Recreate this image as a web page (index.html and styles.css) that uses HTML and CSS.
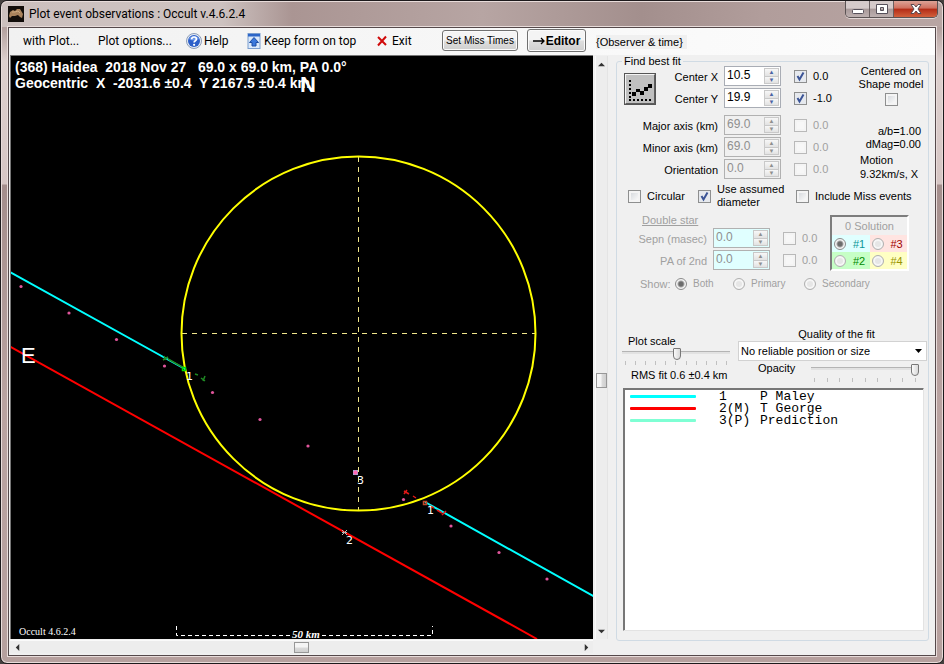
FILE: index.html
```html
<!DOCTYPE html>
<html lang="en">
<head>
<meta charset="utf-8">
<title>Plot event observations : Occult v.4.6.2.4</title>
<link rel="stylesheet" href="styles.css">
</head>
<body>
<div class="window">
  <header class="titlebar">
    <svg class="app-icon" viewBox="0 0 16 16" aria-hidden="true"><rect width="16" height="16" fill="#120d0a"/><path d="M1 10 2 6 5 4 7 5 9 3 12 3 15 8 14 12 12 11 10 9 7 10 4 10 2 12Z" fill="#a9825c"/><path d="M4 6 7 6 10 5 12 7" stroke="#cba880" fill="none"/></svg>
    <h1 class="title">Plot event observations : Occult v.4.6.2.4</h1>
    <div class="caption">
      <button class="cap min" aria-label="Minimize"><svg viewBox="0 0 14 12"><rect x="1.500" y="6.500" width="11" height="4" rx="1" fill="#fff" stroke="#56505a"/></svg></button>
      <button class="cap max" aria-label="Maximize"><svg viewBox="0 0 14 12"><path d="M1.500 1.500h11v9h-11zM5.500 4.500v3h3v-3z" fill="#fff" fill-rule="evenodd" stroke="#56505a"/></svg></button>
      <button class="cap close" aria-label="Close"><svg viewBox="0 0 14 12"><path d="M2 1.500h3l2 2.500 2-2.500h3L9 6l3 4.500H9L7 8l-2 2.500H2L5 6z" fill="#fff" stroke="#5b4a50"/></svg></button>
    </div>
  </header>

  <div class="client">
    <nav class="toolbar">
      <button class="menu">with Plot...</button>
      <button class="menu">Plot options...</button>
      <button class="menu"><svg class="ico" viewBox="0 0 16 16" aria-hidden="true"><circle cx="8" cy="8" r="7.500" fill="#e6ecf4" stroke="#8d9db8"/><circle cx="8" cy="8" r="6" fill="#2c5fc9"/><path d="M3 6a5.500 5 0 0 1 10 0q-5 3-10 0" fill="#6b97ea"/><path d="M5.700 6.300q0-2.300 2.400-2.300 2.300 0 2.300 2 0 1.200-1.300 1.900-1 .6-1 1.600" fill="none" stroke="#fff" stroke-width="1.700"/><circle cx="8.100" cy="11.800" r="1.100" fill="#fff"/></svg>Help</button>
      <button class="menu"><svg class="ico" viewBox="0 0 16 16" aria-hidden="true"><rect x="2" y=".5" width="12" height="15" fill="#dbe9fb" stroke="#7b9dce"/><rect x="2" y="1" width="12" height="2.500" fill="#2d66c8"/><path d="M8 4.500 12.500 9.500H10V13H6V9.500H3.500Z" fill="#3b78dc" stroke="#1d4da4"/></svg>Keep form on top</button>
      <button class="menu"><svg class="ico" viewBox="0 0 16 16" aria-hidden="true"><path d="M4 4 12 12M12 3.500 4 12.500" stroke="#d00b0b" stroke-width="2" fill="none"/></svg>Exit</button>
      <button class="push miss">Set Miss Times</button>
      <button class="push editor"><svg viewBox="0 0 12 8" aria-hidden="true"><path d="M0 4H11M8 1 11 4 8 7" fill="none" stroke="#000" stroke-width="1.300"/></svg>Editor</button>
      <span class="observer">{Observer &amp; time}</span>
    </nav>

    <main class="work">
      <div class="plot">
        <svg class="chart" viewBox="11 56 582 583" preserveAspectRatio="xMinYMin slice" role="img" aria-label="Chord plot">
          <g class="caption-text">
            <text x="15" y="72" xml:space="preserve">(368) Haidea  2018 Nov 27   69.0 x 69.0 km, PA 0.0°</text>
            <text x="15" y="88" xml:space="preserve">Geocentric  X  -2031.6 ±0.4  Y 2167.5 ±0.4 km</text>
          </g>
          <text class="compass bold" x="300" y="92">N</text>
          <g stroke="#f0e68c" fill="none" stroke-dasharray="5 5">
            <path d="M358.500 157V510M182 333.500H535"/>
          </g>
          <circle cx="358.500" cy="333.500" r="177" fill="none" stroke="#ff0" stroke-width="2"/>
          <g fill="none" stroke-width="2">
            <path d="M10 272 185 369M425 502 594 596.500" stroke="#0ff"/>
            <path d="M10 346.500 537 639" stroke="#f00"/>
          </g>
          <g fill="none" stroke="#1f8a24" stroke-width="1.500">
            <path d="M163 360l5-3M164 356l2 4M168 359 184 368M195 374l3 1M201 378l4 3M205 376l-2 5"/>
            <rect x="182.500" y="367.500" width="3" height="3" stroke="#0d0"/>
          </g>
          <g fill="none" stroke="#e01818" stroke-width="1.500">
            <path d="M404 494l3-4M404 491l5 3M413 496l3 2M430 506l4 2M437 510l5 3M442 515l4-4"/>
            <rect x="423.500" y="501.500" width="3" height="3" stroke="#c0492c"/>
          </g>
          <g fill="#e0559b">
            <circle cx="21" cy="286.500" r="1.600"/><circle cx="69" cy="313" r="1.600"/><circle cx="116.500" cy="339.500" r="1.600"/><circle cx="164.500" cy="366" r="1.600"/><circle cx="212.500" cy="392.500" r="1.600"/><circle cx="260" cy="419.500" r="1.600"/><circle cx="308" cy="446" r="1.600"/><circle cx="403.500" cy="499.500" r="1.600"/><circle cx="451" cy="526" r="1.600"/><circle cx="499" cy="552.500" r="1.600"/><circle cx="547" cy="579" r="1.600"/>
          </g>
          <rect x="353" y="470" width="5" height="5" fill="#8fb4d8"/><circle cx="355.500" cy="472.500" r="2.200" fill="#ff69b4"/>
          <path d="M342 530l5 5M347 530l-5 5M342 532.500h5" stroke="#b7b7b7"/>
          <g class="mark">
            <text x="186" y="380">1</text><text x="427" y="514">1</text><text x="346" y="544">2</text><text x="357" y="484">3</text>
          </g>
          <text class="compass" x="21" y="363">E</text>
          <path d="M176.500 626V635.500H290M322 635.500H432.500V626" fill="none" stroke="#fff" stroke-dasharray="4 3"/>
          <text class="scale-text" x="292" y="638">50 km</text>
          <text class="version" x="19" y="635">Occult 4.6.2.4</text>
        </svg>
      </div>
      <div class="bar vertical">
        <button class="arrow" aria-label="Scroll up"><svg viewBox="0 0 8 8"><path d="M0 6 4 2 8 6z"/></svg></button>
        <span class="thumb"></span>
        <button class="arrow" aria-label="Scroll down"><svg viewBox="0 0 8 8"><path d="M0 2 4 6 8 2z"/></svg></button>
      </div>
      <div class="bar horizontal">
        <button class="arrow" aria-label="Scroll left"><svg viewBox="0 0 8 8"><path d="M6 0 2 4 6 8z"/></svg></button>
        <span class="thumb"></span>
        <button class="arrow" aria-label="Scroll right"><svg viewBox="0 0 8 8"><path d="M2 0 6 4 2 8z"/></svg></button>
      </div>

      <fieldset class="panel">
        <legend>Find best fit</legend>

        <div class="fit">
          <div class="params">
            <button class="fit-button" aria-label="Find best fit"><svg viewBox="0 0 28 28"><path d="M3 5h2v2H3zM3 9h2v2H3zM3 13h2v2H3zM3 17h2v2H3zM3 21h2v2H3zM3 24h2v2H3zM7 24h2v2H7zM11 24h2v2h-2zM15 24h2v2h-2zM19 24h2v2h-2zM23 24h2v2h-2zM6 17h4v4H6zM10 14h4v3h-4zM14 16h4v4h-4zM18 12h4v4h-4zM22 9h4v4h-4z"/></svg></button>
            <label class="name short" for="cx">Center X</label>
            <span class="spin"><input id="cx" value="10.5"><span class="steps"><button aria-label="Up">▲</button><button aria-label="Down">▼</button></span></span>
            <label class="delta"><input type="checkbox" checked>0.0</label>
            <label class="name short" for="cy">Center Y</label>
            <span class="spin"><input id="cy" value="19.9"><span class="steps"><button aria-label="Up">▲</button><button aria-label="Down">▼</button></span></span>
            <label class="delta"><input type="checkbox" checked>-1.0</label>
            <span class="gap"></span>
            <label class="name long" for="major">Major axis (km)</label>
            <span class="spin off"><input id="major" value="69.0" disabled><span class="steps"><button disabled aria-label="Up">▲</button><button disabled aria-label="Down">▼</button></span></span>
            <label class="delta off"><input type="checkbox" disabled>0.0</label>
            <label class="name long" for="minor">Minor axis (km)</label>
            <span class="spin off"><input id="minor" value="69.0" disabled><span class="steps"><button disabled aria-label="Up">▲</button><button disabled aria-label="Down">▼</button></span></span>
            <label class="delta off"><input type="checkbox" disabled>0.0</label>
            <label class="name long" for="orient">Orientation</label>
            <span class="spin off"><input id="orient" value="0.0" disabled><span class="steps"><button disabled aria-label="Up">▲</button><button disabled aria-label="Down">▼</button></span></span>
            <label class="delta off"><input type="checkbox" disabled>0.0</label>
          </div>
          <div class="side">
            <label class="centered">Centered on<br>Shape model<input type="checkbox"></label>
            <p class="ratio">a/b=1.00<br>dMag=0.00</p>
            <p class="motion">Motion<br>9.32km/s, X</p>
          </div>
        </div>

        <div class="options">
          <label><input type="checkbox">Circular</label>
          <label class="assumed"><input type="checkbox" checked><span>Use assumed<br>diameter</span></label>
          <label><input type="checkbox">Include Miss events</label>
        </div>

        <div class="double">
          <div class="pair">
            <span class="heading">Double star</span>
            <label class="name" for="sepn">Sepn (masec)</label>
            <span class="spin off aqua"><input id="sepn" value="0.0" disabled><span class="steps"><button disabled aria-label="Up">▲</button><button disabled aria-label="Down">▼</button></span></span>
            <label class="delta off"><input type="checkbox" disabled>0.0</label>
            <label class="name" for="pa">PA of 2nd</label>
            <span class="spin off aqua"><input id="pa" value="0.0" disabled><span class="steps"><button disabled aria-label="Up">▲</button><button disabled aria-label="Down">▼</button></span></span>
            <label class="delta off"><input type="checkbox" disabled>0.0</label>
          </div>
          <div class="solutions">
            <span class="sol-title">0 Solution</span>
            <label class="s1"><input type="radio" name="sol" checked disabled>#1</label>
            <label class="s3"><input type="radio" name="sol" disabled>#3</label>
            <label class="s2"><input type="radio" name="sol" disabled>#2</label>
            <label class="s4"><input type="radio" name="sol" disabled>#4</label>
          </div>
        </div>

        <div class="show">
          <span class="show-name">Show:</span>
          <label><input type="radio" name="show" checked disabled>Both</label>
          <label><input type="radio" name="show" disabled>Primary</label>
          <label><input type="radio" name="show" disabled>Secondary</label>
        </div>

        <div class="display">
          <div class="scale">
            <label for="scale">Plot scale</label>
            <input id="scale" type="range" min="0" max="100" value="51">
            <span class="ticks"><i></i><i></i><i></i><i></i><i></i><i></i><i></i><i></i><i></i><i></i><i></i></span>
            <p>RMS fit 0.6 ±0.4 km</p>
          </div>
          <div class="quality">
            <label for="quality">Quality of the fit</label>
            <select id="quality"><option>No reliable position or size</option></select>
            <div class="opacity">
              <label for="opacity">Opacity</label>
              <div class="slide">
                <input id="opacity" type="range" min="0" max="100" value="100">
                <span class="ticks"><i></i><i></i><i></i><i></i><i></i><i></i><i></i><i></i><i></i></span>
              </div>
            </div>
          </div>
        </div>

        <ul class="observers">
          <li><span class="line cyan"></span><span>1</span><span>P Maley</span></li>
          <li><span class="line red"></span><span>2(M)</span><span>T George</span></li>
          <li><span class="line green"></span><span>3(P)</span><span>Prediction</span></li>
        </ul>
      </fieldset>
    </main>
  </div>
</div>
</body>
</html>
```
FILE: styles.css
```css
* { box-sizing: border-box; }
body { margin: 0; background: #45403f; font: 11px/14px "Liberation Sans", Arial, sans-serif; color: #000; }
button, input, select { font: inherit; color: inherit; margin: 0; padding: 0; }
p, ul { margin: 0; padding: 0; }
svg { display: block; }

.window { height: 100vh; min-height: 600px; display: flex; flex-direction: column; padding: 0 7px 7px; border: 1px solid #1d1a1c; border-radius: 7px; box-shadow: inset 0 0 0 1px #e8dcda; background: linear-gradient(#b3a09e 0 27px, #ddd0ce 60px, #d6c6c4 183px, #a48e8c 184px, #b9a3a1 400px, #b6a09e); }

.titlebar { display: flex; align-items: center; height: 26px; margin: 0 -6px; padding-left: 6px; border-radius: 6px 6px 0 0; border-top: 1px solid #e8dcda; background: linear-gradient(90deg, #ccc0be 0, #cdc2c0 220px, #aa9593 290px, #b7a5a3 480px, #ad9a98 560px, #a38f8d 640px, #b19d9b 760px, #b8a5a3); }
.app-icon { width: 16px; height: 16px; margin-bottom: 1px; }
.title { flex: 1; margin: 0 0 1px 5px; font: 12px/16px Roboto, sans-serif; white-space: nowrap; }
.caption { display: flex; align-self: flex-start; height: 17px; margin: -1px 4px 0 0; border: 1px solid #5b5354; border-top: 0; border-radius: 0 0 5px 5px; overflow: hidden; box-shadow: 0 1px 0 #e1d6d5; }
.cap { width: 24px; border: 0; border-right: 1px solid #6a5f60; background: linear-gradient(#d5caca 0 45%, #a89999 50%, #bdb0b0); display: flex; align-items: center; justify-content: center; }
.cap svg { width: 14px; height: 12px; }
.cap.close { width: 43px; border-right: 0; background: linear-gradient(#dca397 0, #cf6f5e 45%, #b32b16 50%, #d2603c); }

.client { flex: 1; min-height: 0; display: flex; flex-direction: column; border: 1px solid #55494b; outline: 1px solid #e8dcda; background: #f0f0f0; }

.toolbar { display: grid; grid-template-columns: 75px 88px 60px 128px 68px 76px 60px 1fr; align-items: center; height: 27px; flex: none; padding: 0 0 2px 14px; background: linear-gradient(90deg, #f1f1f1, #fdfdfd); }
.menu { display: flex; align-items: center; gap: 2px; padding: 0; border: 0; background: none; font: 12px/16px Roboto, sans-serif; white-space: nowrap; }
.ico { width: 16px; height: 16px; flex: none; }
.push { border: 1px solid #707070; border-radius: 3px; background: linear-gradient(#f4f4f4 0 48%, #dedede 52%, #cfcfcf); box-shadow: inset 0 0 0 1px #fbfbfb; white-space: nowrap; }
.miss { height: 21px; font-size: 10px; }
.editor { height: 23px; margin: 0 0 0 9px; width: 59px; display: flex; align-items: center; justify-content: center; gap: 1px; font-size: 12px; font-weight: bold; }
.editor svg { width: 12px; height: 8px; }
.observer { justify-self: start; margin: 2px 0 0 18px; background: #f0f0f0; white-space: nowrap; padding-right: 4px; }

.work { flex: 1; min-height: 0; display: grid; grid-template-columns: minmax(0, 1fr) 15px 327px; grid-template-rows: minmax(0, 1fr) 16px; }
.plot { margin-left: 1px; border: solid #777; border-width: 1px 0 0 1px; background: #000; overflow: hidden; min-height: 0; }
.chart { width: 100%; height: 100%; }
.caption-text { fill: #fff; font: bold 14px "Liberation Sans", sans-serif; white-space: pre; }
.compass { fill: #fff; font: 22px "Liberation Sans", sans-serif; }
.compass.bold { font-weight: bold; }
.mark { fill: #fff; font: 11px "DejaVu Sans", sans-serif; }
.scale-text { fill: #fff; font: italic bold 11px "Liberation Serif", serif; }
.version { fill: #fff; font: 10px "Liberation Serif", serif; }

.bar { display: flex; align-items: center; justify-content: space-between; background: #ededed; }
.bar.vertical { flex-direction: column; margin: 1px 0 0 2px; padding: 4px 0; border-left: 1px solid #fafafa; border-right: 1px solid #e4e4e4; }
.bar.horizontal { grid-row: 2; grid-column: 1; margin: 1px 0 2px 1px; padding: 0 2px; border-top: 1px solid #fafafa; }
.arrow { width: 10px; height: 8px; border: 0; background: none; display: flex; align-items: center; justify-content: center; }
.arrow svg { width: 7px; height: 7px; fill: #333; }
.thumb { border: 1px solid #979797; background: linear-gradient(#f5f5f5 0 48%, #dcdcdc 52%, #cfcfcf); }
.vertical .thumb { width: 11px; height: 15px; margin-top: 66px; background: linear-gradient(90deg, #f5f5f5 0 48%, #dcdcdc 52%, #cfcfcf); }
.horizontal .thumb { width: 15px; height: 11px; }

.panel { grid-column: 3; grid-row: 1 / 3; min-width: 0; margin: 0 6px 14px 8px; padding: 0; border: 1px solid #d0dbe4; border-radius: 3px; display: flex; flex-direction: column; }
.panel legend { margin-left: 5px; padding: 0 2px; line-height: 12px; }

input[type=checkbox], input[type=radio] { appearance: none; width: 13px; height: 13px; flex: none; border: 1px solid #8e8f8f; background: linear-gradient(135deg, #cfd3d8, #f8f8f8 80%); box-shadow: inset 0 0 0 2px #f4f4f4; }
input[type=checkbox]:checked { background: url("data:image/svg+xml,%3Csvg xmlns='http://www.w3.org/2000/svg' viewBox='0 0 11 11'%3E%3Cpath d='M2.500 5 4.500 8.500 8.500 1.500' fill='none' stroke='%233b5496' stroke-width='2'/%3E%3C/svg%3E") #e6e9ee; box-shadow: none; }
input[type=checkbox]:disabled { border-color: #b9b9b9; background: #f7f7f7; }
input[type=radio] { width: 12px; height: 12px; border-radius: 50%; border-color: #b0b0b0; }
input[type=radio]:disabled { background: #e6e6e6; box-shadow: inset 0 0 0 2px #f6f6f6; }
input[type=radio]:checked:disabled { border-color: #8c8c8c; background: radial-gradient(circle, #6c6c6c 0 2px, #a5a5a5 3px, #f4f4f4 4px); box-shadow: none; }

.fit { display: flex; margin-top: -2px; }
.params { flex: 1; display: grid; grid-template-columns: 40px 67px 57px 1fr; grid-template-rows: 22px 22px 5px 22px 22px 22px; align-items: center; }
.fit-button { grid-row: 1 / 3; grid-column: 1; width: 32px; height: 32px; margin: 4px 0 0 7px; border: 2px solid; border-color: #f4f4f4 #5e5e5e #5e5e5e #f4f4f4; outline: 1px solid #555; outline-offset: -1px; background: #c0c0c0; }
.fit-button svg { width: 28px; height: 28px; }
.name { padding: 2px 6px 0 0; text-align: right; white-space: nowrap; }
.short { grid-column: 2; }
.long { grid-column: 1 / 3; }
.gap { grid-column: 1 / 5; height: 5px; }
.spin { display: flex; width: 57px; height: 20px; border: 1px solid #a9adb5; background: #fff; }
.spin input { flex: 1; min-width: 0; border: 0; padding: 0 0 3px 2px; background: none; font-size: 12px; color: #000; }
.steps { display: flex; flex-direction: column; width: 15px; margin: 1px; }
.steps button { flex: 1; min-height: 0; border: 1px solid #c9c9c9; background: linear-gradient(#f7f7f7, #e2e2e2); font-size: 6px; line-height: 6px; color: #4b64a4; display: flex; align-items: center; justify-content: center; }
.steps button + button { border-top: 0; }
.spin.off { background: #f0f0f0; border-color: #b1b1b1; }
.spin.off input, .spin.off button { color: #8f8f8f; }
.spin.off.aqua { background: #e0ffff; }
.delta { display: flex; align-items: center; gap: 6px; padding-left: 13px; }
.off { color: #a0a0a0; }

.side { width: 92px; }
.centered { display: block; text-align: center; line-height: 13px; padding-left: 18px; white-space: nowrap; }
.centered input { display: block; margin: 2px auto 0; }
.ratio { margin: 19px 7px 0 0; line-height: 13px; text-align: right; }
.motion { margin: 2px 0 0 24px; line-height: 14px; white-space: nowrap; }

.options { display: flex; align-items: center; height: 26px; margin-top: 2px; padding-left: 11px; }
.options label { display: flex; align-items: center; gap: 6px; width: 70px; white-space: nowrap; }
.options .assumed { width: 98px; line-height: 13px; }

.double { display: flex; color: #a0a0a0; margin-top: 3px; }
.pair { width: 213px; display: grid; grid-template-columns: 96px 57px 1fr; grid-template-rows: 15px 22px 22px; align-items: center; }
.heading { grid-column: 1 / 4; margin-left: 25px; text-decoration: underline; }
.solutions { width: 79px; height: 56px; margin-top: 3px; display: grid; grid-template-columns: 1fr 1fr; grid-template-rows: 18px 17px 17px; border: 2px solid; border-color: #7d7d7d #fff #fff #7d7d7d; }
.sol-title { grid-column: 1 / 3; padding-top: 2px; text-align: center; }
.solutions label { display: flex; align-items: center; gap: 7px; padding-left: 2px; }
.s1 { background: #e0ffff; color: #0b9797; }
.s2 { background: #c6ffc6; color: #008a00; }
.s3 { background: #ffe4e1; color: #a00000; }
.s4 { background: #ffffc4; color: #9a9300; }

.show { display: grid; grid-template-columns: 35px 58px 71px 1fr; align-items: center; height: 22px; margin-top: 2px; padding-left: 23px; color: #a0a0a0; font-size: 10px; }
.show-name { font-size: 11px; }
.show label { display: flex; align-items: center; gap: 6px; }

.display { display: flex; margin-top: 32px; }
.scale { width: 108px; margin: 7px 8px 0 5px; display: flex; flex-direction: column; }
.scale label { padding-left: 6px; }
.scale p { padding-left: 9px; margin-top: 2px; white-space: nowrap; }
input[type=range] { appearance: none; width: 100%; height: 13px; background: linear-gradient(#b4b4b4, #b4b4b4) 0 4px / 100% 1px no-repeat, linear-gradient(#e2e2e2, #e2e2e2) 0 5px / 100% 2px no-repeat; }
input[type=range]::-webkit-slider-thumb { appearance: none; width: 8px; height: 12px; border: 1px solid #777; border-radius: 1px 1px 4px 4px; background: linear-gradient(90deg, #fafafa, #d8d8d8); }
.scale input, .scale .ticks { margin-top: -1px; }
.ticks { display: flex; justify-content: space-between; padding: 2px 3px 0; height: 7px; }
.ticks i { width: 1px; height: 4px; background: #c0c0c0; }
.quality { flex: 1; min-width: 0; margin-right: 1px; display: flex; flex-direction: column; }
.quality > label { padding-left: 8px; text-align: center; }
.quality select { appearance: none; height: 20px; width: 100%; padding-left: 2px; border: 1px solid #d2d2d2; border-radius: 0; background: url("data:image/svg+xml,%3Csvg xmlns='http://www.w3.org/2000/svg' viewBox='0 0 7 4'%3E%3Cpath d='M0 0h7L3.500 4z'/%3E%3C/svg%3E") right 4px center / 7px 4px no-repeat #fff; }
.opacity { display: flex; }
.opacity label { width: 73px; padding-left: 20px; }
.slide { flex: 1; margin: 2px 8px 0 0; }
.slide input { display: block; }

.observers { flex: 1; margin: 5px 4px 9px 6px; padding: 2px 5px; border: 1px solid; border-color: #777 #e3e3e3 #e3e3e3 #777; box-shadow: inset 1px 1px 0 #777; background: #fff; list-style: none; font: 13px/12px "Liberation Mono", monospace; }
.observers li { display: grid; grid-template-columns: 90px 41px 1fr; }
.line { width: 66px; height: 3px; margin: 4px 0 0 1px; border-radius: 1px; }
.cyan { background: #0ff; }
.red { background: #f00; }
.green { background: #7fffd4; }
```
